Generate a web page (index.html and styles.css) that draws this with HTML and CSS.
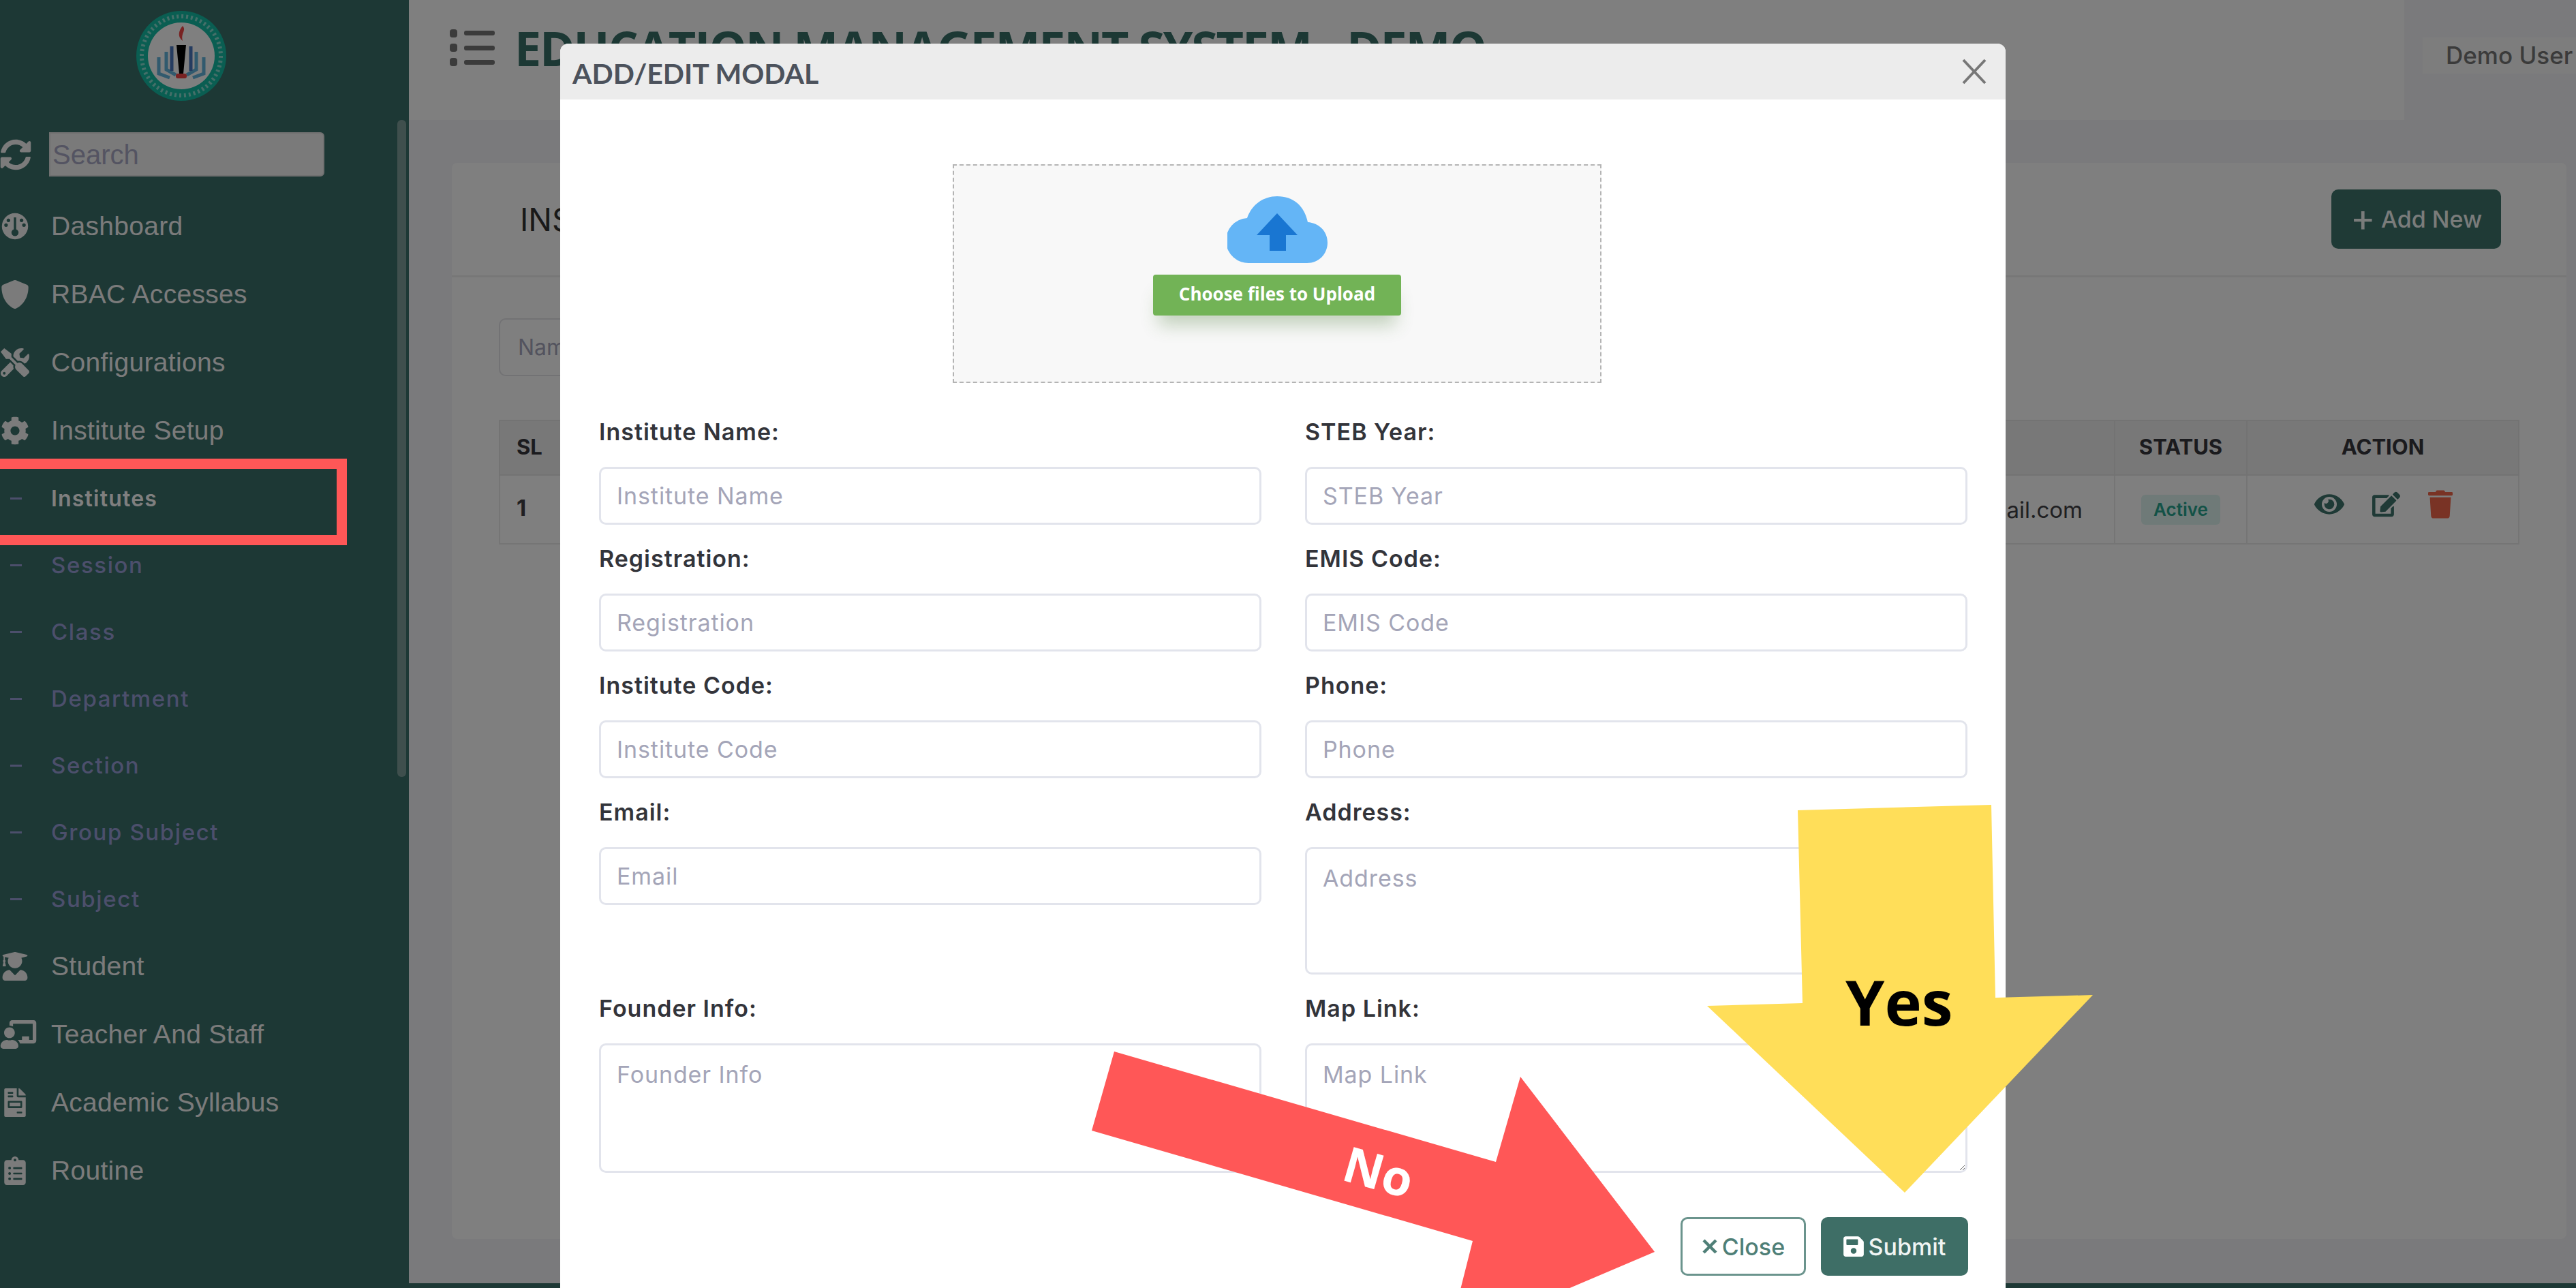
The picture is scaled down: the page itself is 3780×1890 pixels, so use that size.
FILE: index.html
```html
<!DOCTYPE html>
<html>
  <head>
    <title>Education Management System</title>
    <link rel="stylesheet" href="styles.css">
  </head>
  <body>
    <div class="app">
      <aside class="sidebar">
        <div class="logo">
          <svg viewBox="0 0 132 132" width="132" height="132">
            <circle cx="66" cy="66" r="66" fill="#14bda5"/>
            <circle cx="66" cy="66" r="58" fill="none" stroke="#fff" stroke-width="6" stroke-dasharray="3 4" opacity=".5"/>
            <circle cx="66" cy="66" r="49" fill="#fff"/>
            <path d="M44 60v26l14 8M33 68v24l16 6M88 60v26l-14 8M99 68v24l-16 6" fill="none" stroke="#62b4dc" stroke-width="5"/>
            <path d="M52 52v36M80 52v36" fill="none" stroke="#4a78c0" stroke-width="5"/>
            <path d="M59 50h14l-4 42h-6z" fill="#000"/>
            <path d="M68 22c6 7-3 10 0 22-8-6-6-15 0-22z" fill="#f04545"/>
            <rect x="58" y="92" width="16" height="7" rx="3" fill="#f04545"/>
          </svg>
        </div>
        <div class="search-row">
          <svg class="ico" viewBox="0 0 512 512"><path d="M370.72 133.28C339.458 104.008 298.888 87.962 255.848 88c-77.458.068-144.328 53.178-162.791 126.85-1.344 5.363-6.122 9.15-11.651 9.15H24.103c-7.498 0-13.194-6.807-11.807-14.176C33.933 94.924 134.813 8 256 8c66.448 0 126.791 26.136 171.315 68.685L463.03 40.97C478.149 25.851 504 36.559 504 57.941V192c0 13.255-10.745 24-24 24H345.941c-21.382 0-32.09-25.851-16.971-40.971l41.75-41.749zM32 296h134.059c21.382 0 32.09 25.851 16.971 40.971l-41.75 41.75c31.262 29.273 71.835 45.319 114.876 45.28 77.418-.07 144.315-53.144 162.787-126.849 1.344-5.363 6.122-9.15 11.651-9.15h57.304c7.498 0 13.194 6.807 11.807 14.176C478.067 417.076 377.187 504 256 504c-66.448 0-126.791-26.136-171.315-68.685L48.97 471.03C33.851 486.149 8 475.441 8 454.059V320c0-13.255 10.745-24 24-24z"/></svg>
          <input class="search" type="text" placeholder="Search">
        </div>
        <nav class="nav">
          <a class="item"><svg class="ico" viewBox="0 0 48 48"><path fill-rule="evenodd" d="M24 2a22 22 0 1 1 0 44 22 22 0 0 1 0-44zM22 9v20a6 6 0 1 0 4 0V9zM9 19a3 3 0 1 0 0 6 3 3 0 0 0 0-6zm4-8a3 3 0 1 0 0 6 3 3 0 0 0 0-6zm22 0a3 3 0 1 0 0 6 3 3 0 0 0 0-6zm4 8a3 3 0 1 0 0 6 3 3 0 0 0 0-6z"/></svg>Dashboard</a>
          <a class="item"><svg class="ico" viewBox="0 0 512 512"><path d="M466.5 83.7l-192-80a48.15 48.15 0 0 0-36.9 0l-192 80C27.7 91.1 16 108.6 16 128c0 198.5 114.5 335.7 221.5 380.3 11.8 4.9 25.1 4.9 36.9 0C360.1 472.6 496 349.3 496 128c0-19.4-11.7-36.9-29.5-44.3z"/></svg>RBAC Accesses</a>
          <a class="item"><svg class="ico" viewBox="0 0 512 512"><path d="M501.1 395.7L384 278.6c-23.1-23.1-57.6-27.6-85.4-13.9L192 158.1V96L64 0 0 64l96 128h62.1l106.6 106.6c-13.6 27.8-9.2 62.3 13.9 85.4l117.1 117.1c14.6 14.6 38.2 14.6 52.7 0l52.7-52.7c14.5-14.6 14.5-38.2 0-52.7zM331.7 225c28.3 0 54.9 11 74.9 31l19.4 19.4c15.8-6.9 30.8-16.5 43.8-29.5 37.1-37.1 49.7-89.3 37.9-136.7-2.2-9-13.5-12.1-20.1-5.5l-74.4 74.4-67.9-11.3L334 98.9l74.4-74.4c6.6-6.6 3.4-17.9-5.7-20.2-47.4-11.7-99.6.9-136.6 37.9-28.5 28.5-41.9 66.1-41.2 103.6l82.1 82.1c8.1-1.9 16.5-2.9 24.7-2.9zm-103.9 82l-56.7-56.7L18.7 402.8c-25 25-25 65.5 0 90.5s65.5 25 90.5 0l123.6-123.6c-7.6-19.9-9.9-41.6-5-62.7zM64 472c-13.2 0-24-10.8-24-24 0-13.3 10.7-24 24-24s24 10.7 24 24c0 13.2-10.7 24-24 24z"/></svg>Configurations</a>
          <a class="item"><svg class="ico" viewBox="0 0 512 512"><path d="M487.4 315.7l-42.6-24.6c4.3-23.2 4.3-47 0-70.2l42.6-24.6c4.9-2.8 7.1-8.6 5.5-14-11.1-35.6-30-67.8-54.7-94.6-3.8-4.1-10-5.1-14.8-2.3L380.8 110c-17.9-15.4-38.5-27.3-60.8-35.1V25.8c0-5.6-3.9-10.5-9.4-11.7-36.7-8.2-74.3-7.8-109.2 0-5.5 1.2-9.4 6.1-9.4 11.7V75c-22.2 7.9-42.8 19.8-60.8 35.1L88.7 85.5c-4.9-2.8-11-1.9-14.8 2.3-24.7 26.7-43.6 58.9-54.7 94.6-1.7 5.4.6 11.2 5.5 14L67.3 221c-4.3 23.2-4.3 47 0 70.2l-42.6 24.6c-4.9 2.8-7.1 8.6-5.5 14 11.1 35.6 30 67.8 54.7 94.6 3.8 4.1 10 5.1 14.8 2.3l42.6-24.6c17.9 15.4 38.5 27.3 60.8 35.1v49.2c0 5.6 3.9 10.5 9.4 11.7 36.7 8.2 74.3 7.8 109.2 0 5.5-1.2 9.4-6.1 9.4-11.7v-49.2c22.2-7.9 42.8-19.8 60.8-35.1l42.6 24.6c4.9 2.8 11 1.9 14.8-2.3 24.7-26.7 43.6-58.9 54.7-94.6 1.5-5.5-.7-11.3-5.6-14.1zM256 336c-44.1 0-80-35.9-80-80s35.9-80 80-80 80 35.9 80 80-35.9 80-80 80z"/></svg>Institute Setup</a>
          <a class="item sub active"><span class="dash"></span>Institutes</a>
          <a class="item sub"><span class="dash"></span>Session</a>
          <a class="item sub"><span class="dash"></span>Class</a>
          <a class="item sub"><span class="dash"></span>Department</a>
          <a class="item sub"><span class="dash"></span>Section</a>
          <a class="item sub"><span class="dash"></span>Group Subject</a>
          <a class="item sub"><span class="dash"></span>Subject</a>
          <a class="item"><svg class="ico" viewBox="0 0 448 512"><path d="M319.4 320.6L224 416l-95.4-95.4C57.1 323.7 0 382.2 0 454.4v9.6c0 26.5 21.5 48 48 48h352c26.5 0 48-21.5 48-48v-9.6c0-72.2-57.1-130.7-128.6-133.8zM13.6 79.8l6.4 1.5v58.4c-7 4.2-12 11.5-12 20.3 0 8.4 4.6 15.4 11.1 19.7L3.5 242c-1.7 6.9 2.1 14 7.6 14h41.8c5.5 0 9.3-7.1 7.6-14l-15.6-62.3C51.4 175.4 56 168.4 56 160c0-8.8-5-16.1-12-20.3V87.1l66 15.9c-8.6 17.2-14 36.4-14 57 0 70.7 57.3 128 128 128s128-57.3 128-128c0-20.6-5.3-39.8-14-57l96.3-23.2c18.2-4.4 18.2-27.1 0-31.5l-190.4-46c-13-3.1-26.7-3.1-39.7 0L13.6 48.2c-18.1 4.4-18.1 27.2 0 31.6z"/></svg>Student</a>
          <a class="item"><svg class="ico wide" viewBox="0 0 640 512"><path d="M208 352c-2.39 0-4.78.35-7.06 1.09C187.98 357.3 174.35 360 160 360c-14.35 0-27.98-2.7-40.95-6.91-2.28-.74-4.66-1.09-7.05-1.09C49.94 352-.33 402.48 0 464.62.14 490.88 21.73 512 48 512h224c26.27 0 47.86-21.12 48-47.38.33-62.14-49.94-112.62-112-112.62zm-48-32c53.02 0 96-42.98 96-96s-42.98-96-96-96-96 42.98-96 96 42.98 96 96 96zM592 0H208c-26.47 0-48 22.25-48 49.59V96c23.42 0 45.1 6.78 64 17.8V64h352v288h-64v-64H384v64h-76.24c19.1 16.69 33.12 38.73 39.69 64H592c26.47 0 48-22.25 48-49.59V49.59C640 22.25 618.47 0 592 0z"/></svg>Teacher And Staff</a>
          <a class="item"><svg class="ico" viewBox="0 0 384 512"><path d="M288 256H96v64h192v-64zm89-151L279.1 7c-4.5-4.5-10.6-7-17-7H256v128h128v-6.1c0-6.3-2.5-12.4-7-16.9zm-153 31V0H24C10.7 0 0 10.7 0 24v464c0 13.3 10.7 24 24 24h336c13.3 0 24-10.7 24-24V160H248c-13.2 0-24-10.8-24-24zM64 72c0-4.42 3.58-8 8-8h80c4.42 0 8 3.58 8 8v16c0 4.42-3.58 8-8 8H72c-4.42 0-8-3.58-8-8V72zm0 64c0-4.42 3.58-8 8-8h80c4.42 0 8 3.58 8 8v16c0 4.42-3.58 8-8 8H72c-4.42 0-8-3.58-8-8v-16zm256 304c0 4.42-3.58 8-8 8h-80c-4.42 0-8-3.58-8-8v-16c0-4.42 3.58-8 8-8h80c4.42 0 8 3.58 8 8v16zm0-200v96c0 8.84-7.16 16-16 16H80c-8.84 0-16-7.16-16-16v-96c0-8.84 7.16-16 16-16h224c8.84 0 16 7.16 16 16z"/></svg>Academic Syllabus</a>
          <a class="item"><svg class="ico" viewBox="0 0 384 512"><path d="M336 64h-80c0-35.3-28.7-64-64-64s-64 28.7-64 64H48C21.5 64 0 85.5 0 112v352c0 26.5 21.5 48 48 48h288c26.5 0 48-21.5 48-48V112c0-26.5-21.5-48-48-48zM96 424c-13.3 0-24-10.7-24-24s10.7-24 24-24 24 10.7 24 24-10.7 24-24 24zm0-96c-13.3 0-24-10.7-24-24s10.7-24 24-24 24 10.7 24 24-10.7 24-24 24zm0-96c-13.3 0-24-10.7-24-24s10.7-24 24-24 24 10.7 24 24-10.7 24-24 24zm96-192c13.3 0 24 10.7 24 24s-10.7 24-24 24-24-10.7-24-24 10.7-24 24-24zm128 368c0 4.4-3.6 8-8 8H168c-4.4 0-8-3.6-8-8v-16c0-4.4 3.6-8 8-8h144c4.4 0 8 3.6 8 8v16zm0-96c0 4.4-3.6 8-8 8H168c-4.4 0-8-3.6-8-8v-16c0-4.4 3.6-8 8-8h144c4.4 0 8 3.6 8 8v16zm0-96c0 4.4-3.6 8-8 8H168c-4.4 0-8-3.6-8-8v-16c0-4.4 3.6-8 8-8h144c4.4 0 8 3.6 8 8v16z"/></svg>Routine</a>
        </nav>
        <div class="scrollbar"></div>
      </aside>

      <div class="main">
        <div class="topbar">
          <header class="header">
            <svg class="menu-icon" viewBox="0 0 66 56">
              <rect x="0" y="1" width="11" height="12" rx="4"/><rect x="0" y="22" width="11" height="12" rx="4"/><rect x="0" y="43" width="11" height="12" rx="4"/>
              <rect x="21" y="3" width="45" height="7" rx="3"/><rect x="21" y="25" width="45" height="7" rx="3"/><rect x="21" y="46" width="45" height="7" rx="3"/>
            </svg>
            <h1 class="app-title">EDUCATION MANAGEMENT SYSTEM - DEMO</h1>
          </header>
          <div class="user-area"><span class="user-chip">Demo User</span></div>
        </div>
        <div class="content">
          <section class="card">
            <div class="card-head">
              <h2 class="card-title">INSTITUTES</h2>
              <button class="add-btn"><span class="plus">+</span>Add New</button>
            </div>
            <div class="card-body">
              <input class="filter" type="text" placeholder="Name">
              <table class="table">
                <thead>
                  <tr><th class="col-sl">SL</th><th class="col-mail"></th><th class="col-status">STATUS</th><th class="col-action">ACTION</th></tr>
                </thead>
                <tbody>
                  <tr>
                    <td class="num">1</td>
                    <td class="mail">demo@gmail.com</td>
                    <td class="center"><span class="badge">Active</span></td>
                    <td class="center">
                      <div class="actions">
                        <svg class="act eye" viewBox="0 0 576 512"><path d="M572.52 241.4C518.29 135.59 410.93 64 288 64S57.68 135.64 3.48 241.41a32.35 32.35 0 0 0 0 29.19C57.71 376.41 165.07 448 288 448s230.32-71.64 284.52-177.41a32.35 32.35 0 0 0 0-29.19zM288 400a144 144 0 1 1 144-144 143.93 143.93 0 0 1-144 144zm0-240a95.31 95.31 0 0 0-25.31 3.79 47.85 47.85 0 0 1-66.9 66.9A95.78 95.78 0 1 0 288 160z"/></svg>
                        <svg class="act pen" viewBox="0 0 576 512"><path d="M402.6 83.2l90.2 90.2c3.8 3.8 3.8 10 0 13.8L274.4 405.6l-92.8 10.3c-12.4 1.4-22.9-9.1-21.5-21.5l10.3-92.8L388.8 83.2c3.8-3.8 10-3.8 13.8 0zm162-22.9l-48.8-48.8c-15.2-15.2-39.9-15.2-55.2 0l-35.4 35.4c-3.8 3.8-3.8 10 0 13.8l90.2 90.2c3.8 3.8 10 3.8 13.8 0l35.4-35.4c15.2-15.3 15.2-40 0-55.2zM384 346.2V448H64V128h229.8c3.2 0 6.2-1.3 8.5-3.5l40-40c7.6-7.6 2.2-20.5-8.5-20.5H48C21.5 64 0 85.5 0 112v352c0 26.5 21.5 48 48 48h352c26.5 0 48-21.5 48-48V306.2c0-10.7-12.9-16-20.5-8.5l-40 40c-2.2 2.3-3.5 5.3-3.5 8.5z"/></svg>
                        <svg class="act bin" viewBox="0 0 448 512"><path d="M432 32H312l-9.4-18.7A24 24 0 0 0 281.1 0H166.8a23.72 23.72 0 0 0-21.4 13.3L136 32H16A16 16 0 0 0 0 48v32a16 16 0 0 0 16 16h416a16 16 0 0 0 16-16V48a16 16 0 0 0-16-16zM53.2 467a48 48 0 0 0 47.9 45h245.8a48 48 0 0 0 47.9-45L416 128H32z"/></svg>
                      </div>
                    </td>
                  </tr>
                </tbody>
              </table>
            </div>
          </section>
        </div>
        <div class="foot"></div>
      </div>
    </div>

    <div class="backdrop"></div>

    <div class="modal">
      <div class="modal-head">
        <h3 class="modal-title">ADD/EDIT MODAL</h3>
        <svg class="modal-x" viewBox="0 0 36 40"><path d="M2 3l32 34M34 3L2 37"/></svg>
      </div>
      <div class="modal-body">
        <div class="upload">
          <svg class="cloud" viewBox="0 0 147 99">
            <path d="M33 98a33 33 0 0 1-4-66C36 12 53 0 73 0c24 0 40 14 45 38 16 1 29 13 29 30 0 17-13 30-30 30z" fill="#64b5f6"/>
            <path d="M73 25l30 32H86v23H62V57H43z" fill="#1976d2"/>
          </svg>
          <span class="upload-btn">Choose files to Upload</span>
        </div>
        <form class="form">
          <div class="field"><label>Institute Name:</label><input type="text" placeholder="Institute Name"></div>
          <div class="field"><label>STEB Year:</label><input type="text" placeholder="STEB Year"></div>
          <div class="field"><label>Registration:</label><input type="text" placeholder="Registration"></div>
          <div class="field"><label>EMIS Code:</label><input type="text" placeholder="EMIS Code"></div>
          <div class="field"><label>Institute Code:</label><input type="text" placeholder="Institute Code"></div>
          <div class="field"><label>Phone:</label><input type="text" placeholder="Phone"></div>
          <div class="field"><label>Email:</label><input type="text" placeholder="Email"></div>
          <div class="field"><label>Address:</label><textarea placeholder="Address"></textarea></div>
          <div class="field"><label>Founder Info:</label><textarea class="tall" placeholder="Founder Info"></textarea></div>
          <div class="field"><label>Map Link:</label><textarea class="tall" placeholder="Map Link"></textarea></div>
        </form>
        <div class="modal-foot">
          <button class="btn btn-close" type="button"><svg class="btn-x" viewBox="0 0 24 24"><path d="M3 3l18 18M21 3L3 21"/></svg>Close</button>
          <button class="btn btn-submit" type="button">
            <svg class="save" viewBox="0 0 448 512"><path d="M433.941 129.941l-83.882-83.882A48 48 0 0 0 316.118 32H48C21.49 32 0 53.49 0 80v352c0 26.51 21.49 48 48 48h352c26.51 0 48-21.49 48-48V163.882a48 48 0 0 0-14.059-33.941zM224 416c-35.346 0-64-28.654-64-64 0-35.346 28.654-64 64-64s64 28.654 64 64c0 35.346-28.654 64-64 64zm96-304.52V212c0 6.627-5.373 12-12 12H76c-6.627 0-12-5.373-12-12V108c0-6.627 5.373-12 12-12h228.52c3.183 0 6.235 1.264 8.485 3.515l3.48 3.48A11.996 11.996 0 0 1 320 111.48z"/></svg>Submit
          </button>
        </div>
      </div>
    </div>

    <!-- annotations drawn over the screenshot -->
    <svg class="marks" viewBox="0 0 3780 1890">
      <path class="mark-box" d="M-10 680.5H501.5V792.5H-10"/>
      <polygon class="mark-red" points="1635,1543 2195,1705 2231,1580 2428,1837 2280,1900 2141,1900 2161,1821 1602,1659"/>
      <polygon class="mark-yellow" points="2638,1189 2922,1181 2928,1464 3071,1460 2795,1750 2505,1476 2645,1472"/>
    </svg>
    <div class="mark-yes">Yes</div>
    <div class="mark-no">No</div>
  </body>
</html>
```

FILE: styles.css
```css
* { box-sizing: border-box; }
html, body {
  margin: 0;
  width: 3780px;
  height: 1890px;
  overflow: hidden;
}
body {
  position: relative;
  background: #f4f4f8;
  font-family: Inter, "Liberation Sans", sans-serif;
}
.app { display: flex; height: 1890px; }

/* sidebar */
.sidebar {
  position: relative;
  flex: 0 0 600px;
  background: #3a706a;
  font-family: "Liberation Sans", sans-serif;
  overflow: hidden;
}
.logo { height: 176px; padding-top: 16px; display: flex; justify-content: center; padding-right: 68px; }
.search-row {
  display: flex;
  align-items: center;
  height: 65px;
  margin-top: 18px;
}
.search-row .ico { flex: 0 0 46px; width: 46px; height: 46px; margin-right: 26px; }
.search {
  width: 404px;
  height: 65px;
  border: 2px solid #e0e0e0;
  border-radius: 0 6px 6px 0;
  background: #f4f4f4;
  font: 40px "Liberation Sans", sans-serif;
  padding: 2px 4px 0 3px;
}
.search::placeholder { color: #a9a9c4; opacity: 1; }
.nav { margin-top: 23px; }
.item {
  display: flex;
  align-items: center;
  height: 100px;
  font-size: 39px;
  letter-spacing: .3px;
  color: #f6f6f6;
}
.ico { width: 75px; height: 42px; fill: #f6f6f6; flex: 0 0 auto; }
.item .ico { flex: 0 0 44px; width: 44px; margin-right: 31px; }
.item .ico.wide { flex: 0 0 54px; width: 54px; margin-right: 21px; }
.item.sub {
  height: 98px;
  font-family: Inter, sans-serif;
  font-weight: 500;
  font-size: 33px;
  letter-spacing: 1.6px;
  color: #989fd8;
}
.item.sub.active { color: #fff; font-weight: 600; font-size: 32px; letter-spacing: 1.2px; }
.dash {
  flex: 0 0 17px;
  height: 3px;
  margin: 0 43px 0 15px;
  background: #989fd8;
}
.scrollbar {
  position: absolute;
  left: 583px;
  top: 176px;
  width: 13px;
  height: 964px;
  border-radius: 6px;
  background: #7f9f9b;
}

/* main column */
.main { flex: 1; display: flex; flex-direction: column; min-width: 0; }
.topbar { display: flex; height: 176px; flex: 0 0 176px; }
.header {
  flex: 0 0 2928px;
  background: #fff;
  display: flex;
  align-items: flex-start;
  padding: 42px 0 0 60px;
}
.menu-icon { width: 66px; height: 56px; fill: #777; margin-right: 29px; flex: 0 0 66px; }
.app-title {
  margin: -12px 0 0;
  font-family: "Open Sans", sans-serif;
  font-size: 70px;
  font-weight: 700;
  letter-spacing: -2.2px;
  line-height: 80px;
  color: #387069;
  white-space: nowrap;
}
.user-area { flex: 1; padding-top: 55px; padding-left: 27px; overflow: hidden; }
.user-chip {
  display: block;
  width: 240px;
  height: 53px;
  line-height: 53px;
  padding-left: 34px;
  background: #fafafa;
  font-size: 35px;
  font-weight: 500;
  color: #777;
  white-space: nowrap;
}
.content { flex: 0 0 1707px; padding: 63px 14px 0 63px; }
.card { height: 1579px; background: #fff; border-radius: 8px; }
.card-head {
  display: flex;
  align-items: center;
  justify-content: space-between;
  height: 168px;
  padding: 0 96px 0 100px;
  border-bottom: 3px solid #eee;
}
.card-title { margin: 0; font-size: 46px; font-weight: 400; color: #333; white-space: nowrap; }
.add-btn {
  width: 249px;
  height: 87px;
  display: flex;
  align-items: center;
  justify-content: center;
  gap: 8px;
  border: 0;
  border-radius: 10px;
  background: #3e746c;
  color: #f4f8f7;
  font: 500 34px Inter, sans-serif;
}
.plus { font-size: 56px; font-weight: 400; line-height: 1; margin-top: -6px; }
.card-body { padding: 60px 69px 0; }
.filter {
  display: block;
  width: 400px;
  height: 85px;
  border: 2px solid #e4e4e8;
  border-radius: 10px;
  padding: 0 26px;
  font: 32px Inter, sans-serif;
}
.filter::placeholder { color: #a6a6bd; opacity: 1; }
.table {
  width: 2965px;
  margin-top: 64px;
  border-collapse: collapse;
  table-layout: fixed;
}
.table th {
  height: 80px;
  padding-bottom: 4px;
  background: #f1f1f1;
  border: 2px solid #e6e6e6;
  font-size: 31px;
  font-weight: 700;
  color: #36363c;
}
.table td {
  height: 101px;
  border: 2px solid #eaeaea;
  font-size: 33px;
  color: #3e3e44;
}
.col-sl { width: 120px; text-align: left; padding-left: 24px; }
.col-status { width: 194px; }
.col-action { width: 399px; }
.table .num { padding: 0 0 5px 24px; font-weight: 700; }
.mail { text-align: right; padding-right: 46px; }
.center { text-align: center; }
.badge {
  display: inline-block;
  width: 116px;
  height: 44px;
  line-height: 44px;
  border-radius: 6px;
  background: #dff5f1;
  color: #27a48e;
  font-size: 26px;
  font-weight: 600;
}
.actions { display: flex; justify-content: center; gap: 41px; align-items: center; margin: -16px 0 0 2px; }
.act { height: 42px; }
.eye { width: 44px; }
.pen { width: 41px; }
.bin { width: 36px; }
.eye, .pen { fill: #3e746c; }
.bin { fill: #f2674a; }
.foot { flex: 1; background: #3a706a; }

/* dim layer, modal */
.backdrop { position: absolute; inset: 0; background: rgba(0, 0, 0, .5); }
.modal {
  position: absolute;
  left: 822px;
  top: 64px;
  width: 2121px;
  height: 1900px;
  background: #fff;
  border-radius: 12px 12px 0 0;
}
.modal-head {
  display: flex;
  align-items: center;
  justify-content: space-between;
  height: 82px;
  padding: 0 28px 0 18px;
  background: #ececec;
  border-radius: 12px 12px 0 0;
}
.modal-title {
  margin: 4px 0 0;
  font-family: Lato, sans-serif;
  font-size: 41px;
  font-weight: 700;
  color: #4c525c;
}
.modal-x { width: 36px; height: 40px; fill: none; stroke: #777; stroke-width: 4; }
.modal-body { padding: 95px 55px 0 57px; }
.upload {
  display: flex;
  flex-direction: column;
  align-items: center;
  width: 952px;
  height: 321px;
  margin: 0 0 47px 519px;
  padding-top: 45px;
  border: 2px dashed #b4b4b4;
  background: #f8f8f8;
}
.cloud { width: 147px; height: 99px; }
.upload-btn {
  display: block;
  width: 364px;
  height: 60px;
  margin-top: 16px;
  text-align: center;
  border-radius: 4px;
  background: #72b356;
  color: #fff;
  font: 700 26px/56px "Open Sans", sans-serif;
  box-shadow: 0 22px 26px -8px rgba(70, 120, 50, .3);
}
.form {
  display: grid;
  grid-template-columns: 972px 972px;
  column-gap: 64px;
  row-gap: 25px;
}
.field label {
  display: block;
  height: 50px;
  margin-bottom: 26px;
  line-height: 50px;
  font-size: 34px;
  font-weight: 600;
  letter-spacing: 1px;
  color: #33343a;
}
.field input, .field textarea {
  display: block;
  width: 100%;
  border: 3px solid #e2e4ec;
  border-radius: 10px;
  padding: 0 23px;
  font: 34px Inter, sans-serif;
  letter-spacing: .9px;
  background: #fff;
}
.field input { height: 85px; }
.field textarea { height: 187px; padding-top: 22px; resize: vertical; }
.field textarea.tall { height: 190px; }
.field input::placeholder, .field textarea::placeholder { color: #a4a5b8; opacity: 1; }
.modal-foot {
  display: flex;
  justify-content: flex-end;
  gap: 22px;
  margin-top: 65px;
}
.btn {
  display: flex;
  align-items: center;
  justify-content: center;
  height: 86px;
  border-radius: 10px;
  font: 500 34px Inter, sans-serif;
}
.btn-close { width: 184px; gap: 6px; background: #fff; border: 3px solid #6b948d; color: #4f7f77; }
.btn-x { width: 24px; height: 24px; fill: none; stroke: #4f7f77; stroke-width: 4.5; }
.btn-submit { width: 216px; gap: 7px; background: #3e6e66; border: 0; color: #f0f5f4; }
.save { width: 30px; height: 34px; fill: #fff; }

/* annotations */
.marks { position: absolute; left: 0; top: 0; width: 3780px; height: 1890px; }
.mark-box { fill: none; stroke: #ff5757; stroke-width: 15; }
.mark-red { fill: #ff5757; }
.mark-yellow { fill: #ffde59; }
.mark-yes, .mark-no { position: absolute; font-family: "Open Sans", sans-serif; font-weight: 700; line-height: 1; }
.mark-yes { left: 2708px; top: 1424px; font-size: 92px; color: #000; }
.mark-no { left: 1972px; top: 1682px; font-size: 72px; color: #fff; transform: rotate(16deg); }
```
